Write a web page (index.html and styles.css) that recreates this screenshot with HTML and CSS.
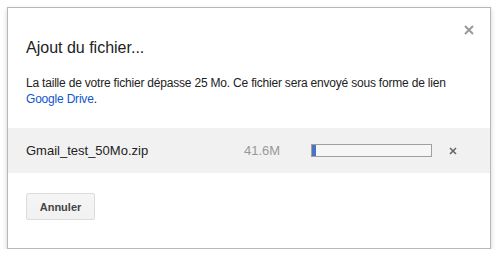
FILE: index.html
```html
<!DOCTYPE html>
<html lang="fr">
<head>
    <meta charset="UTF-8">
    <title>Ajout du fichier...</title>
    <link rel="stylesheet" href="styles.css">
</head>
<body>
    <div class="dialog">
        <span class="close">
            <svg width="10" height="10" viewBox="0 0 10 10"><path d="M1 1L9 9M9 1L1 9" stroke="#9a9a9a" stroke-width="2"/></svg>
        </span>
        <div class="header">
            <h2 class="title">Ajout du fichier...</h2>
            <p class="message">La taille de votre fichier dépasse 25 Mo. Ce fichier sera envoyé sous forme de lien <a href="#">Google Drive</a>.</p>
        </div>
        <div class="file-row">
            <span class="file-name">Gmail_test_50Mo.zip</span>
            <span class="file-size">41.6M</span>
            <span class="progress"><span class="progress-fill" style="width: 3%"></span></span>
            <span class="remove">
                <svg width="8" height="8" viewBox="0 0 8 8"><path d="M1 1L7 7M7 1L1 7" stroke="#666" stroke-width="1.6"/></svg>
            </span>
        </div>
        <div class="footer">
            <button class="btn">Annuler</button>
        </div>
    </div>
</body>
</html>
```

FILE: styles.css
```css
body {
    margin: 0;
    padding: 7px 0 0 7px;
    font-family: "Liberation Sans", Arial, sans-serif;
    background: #fff;
}
.dialog {
    position: relative;
    width: 482px;
    border: 1px solid #b8b8b8;
    box-shadow: 0 2px 5px rgba(0, 0, 0, 0.18);
    background: #fff;
}
.close {
    position: absolute;
    top: 17px;
    right: 16px;
    line-height: 0;
}
.header {
    padding: 30px 18px 0 18px;
}
.title {
    margin: 0;
    font-size: 16px;
    line-height: 20px;
    font-weight: normal;
    color: #222;
}
.message {
    margin: 17px 0 0;
    font-size: 12px;
    line-height: 16px;
    letter-spacing: -0.2px;
    color: #222;
}
.message a {
    color: #15c;
    text-decoration: none;
}
.file-row {
    display: flex;
    align-items: center;
    height: 45px;
    margin-top: 21px;
    padding-left: 18px;
    background: #f1f1f1;
    font-size: 13px;
}
.file-name {
    width: 218px;
    color: #222;
}
.file-size {
    width: 67px;
    color: #999;
}
.progress {
    display: flex;
    width: 119px;
    height: 11px;
    border: 1px solid #a0a0a0;
    background: #f6f6f6;
}
.progress-fill {
    background: #4a73c6;
}
.remove {
    margin-left: 17px;
    line-height: 0;
}
.footer {
    padding: 20px 18px 28px;
}
.btn {
    display: block;
    width: 69px;
    height: 27px;
    padding: 0;
    border: 1px solid #dcdcdc;
    border-radius: 2px;
    background: linear-gradient(#f5f5f5, #f1f1f1);
    font-family: "Liberation Sans", Arial, sans-serif;
    font-size: 11px;
    font-weight: bold;
    color: #444;
}
```
